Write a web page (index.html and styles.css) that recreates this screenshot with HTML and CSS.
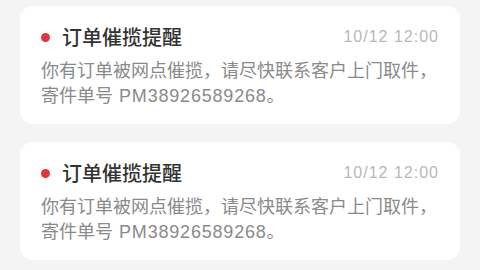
FILE: index.html
```html
<!DOCTYPE html>
<html lang="zh-CN">
<head>
<meta charset="utf-8">
<link rel="stylesheet" href="styles.css">
</head>
<body>
<div class="list">
  <div class="card">
    <div class="head">
      <span class="dot"></span>
      <span class="title">订单催揽提醒</span>
      <span class="time">10/12 12:00</span>
    </div>
    <p class="body">你有订单被网点催揽，请尽快联系客户上门取件，寄件单号 <span class="no">PM38926589268</span>。</p>
  </div>
  <div class="card">
    <div class="head">
      <span class="dot"></span>
      <span class="title">订单催揽提醒</span>
      <span class="time">10/12 12:00</span>
    </div>
    <p class="body">你有订单被网点催揽，请尽快联系客户上门取件，寄件单号 <span class="no">PM38926589268</span>。</p>
  </div>
</div>
</body>
</html>
```
FILE: styles.css
```css
html, body {
  margin: 0;
  padding: 0;
  background: #f4f4f4;
  font-family: "Noto Sans CJK SC", "Noto Sans", sans-serif;
}
.list {
  display: flex;
  flex-direction: column;
  gap: 18px;
  padding: 6px 20px 0 20px;
}
.card {
  background: #ffffff;
  border-radius: 13px;
  padding: 19px 22px 17px 21px;
}
.head {
  display: flex;
  align-items: center;
  height: 24px;
}
.dot {
  width: 9px;
  height: 9px;
  border-radius: 50%;
  background: #e5333d;
  margin-right: 12px;
  flex: none;
}
.title {
  font-size: 20px;
  line-height: 24px;
  color: #333333;
  font-weight: 500;
  flex: 1;
}
.time {
  font-family: "Liberation Sans", sans-serif;
  font-size: 16px;
  letter-spacing: 1px;
  margin-right: -1px;
  color: #b8b8b8;
}
.body {
  margin: 8px 0 0 0;
  font-size: 18px;
  line-height: 25px;
  color: #8a8a8a;
}
.no {
  font-family: "Liberation Sans", sans-serif;
  letter-spacing: 0.8px;
  margin-left: 2px;
  line-height: 1;
}
```
